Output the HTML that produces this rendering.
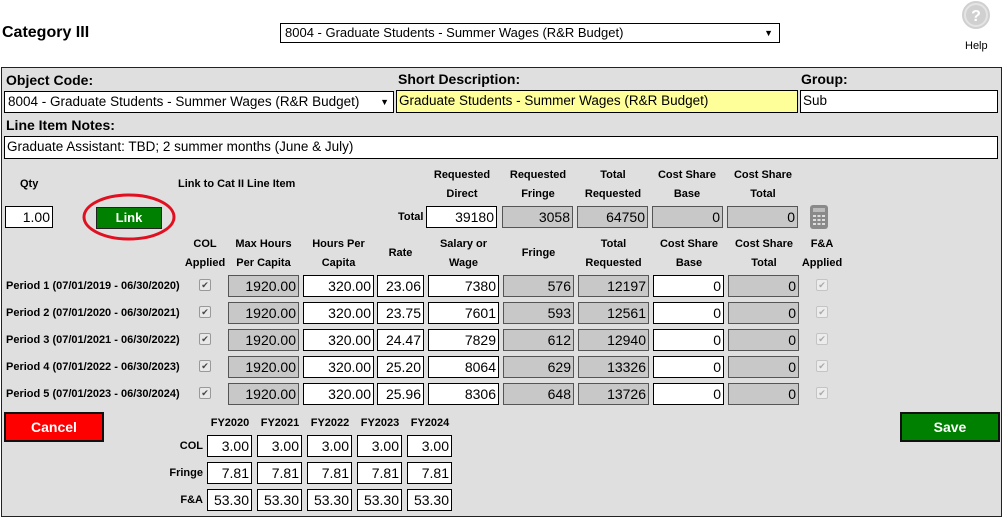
<!DOCTYPE html>
<html><head><meta charset="utf-8"><style>
*{box-sizing:border-box;margin:0;padding:0}
body{width:1007px;height:522px;background:#fff;font-family:"Liberation Sans",Arial,sans-serif;position:relative;overflow:hidden;color:#000}
.a{position:absolute}
.i{position:absolute;height:22px;border:1px solid #000;background:#fff;font-size:14px;line-height:20px;text-align:right;padding-right:2px;color:#000;white-space:nowrap;overflow:hidden}
.g{background:#c8c8c8;border-color:#555}
.l{position:absolute;font-size:11px;font-weight:bold;text-align:center;line-height:19px;white-space:nowrap}
.lb{position:absolute;font-size:14px;font-weight:bold;white-space:nowrap}
.p{position:absolute;font-size:11px;font-weight:bold;left:6px;white-space:nowrap}
.cb{position:absolute;width:12px;height:12px;border:1px solid #999;background:#e8e8e8;border-radius:2px;font-size:9px;line-height:10px;text-align:center;color:#444}
.cb.d{color:#aaa;border-color:#c4c4c4;background:#ececec}
</style></head><body>
<div class="a" style="left:2px;top:24px;font-size:16px;font-weight:bold">Category III</div>
<div class="i" style="left:280px;top:23px;width:500px;height:20px;text-align:left;padding-left:4px;font-size:13px;line-height:18px">8004 - Graduate Students - Summer Wages (R&amp;R Budget)<span style="position:absolute;right:6px;font-size:9px">▼</span></div>
<svg class="a" style="left:961px;top:0" width="30" height="30"><circle cx="15" cy="15" r="13" fill="#e4e4e4" stroke="#d0d0d0" stroke-width="2"/><circle cx="15" cy="15" r="10" fill="#d0d0d0"/><text x="15" y="21" font-size="16" font-weight="bold" fill="#fff" text-anchor="middle" font-family="Liberation Sans">?</text></svg>
<div class="a" style="left:965px;top:40px;font-size:11px">Help</div>

<div class="a" style="left:1px;top:67px;width:1001px;height:450px;background:#dfdfdf;border:1px solid #222"></div>
<div class="lb" style="left:6px;top:72px">Object Code:</div>
<div class="lb" style="left:398px;top:71px">Short Description:</div>
<div class="lb" style="left:801px;top:71px">Group:</div>
<div class="i" style="left:4px;top:91px;width:390px;text-align:left;padding-left:3px;font-size:13.5px">8004 - Graduate Students - Summer Wages (R&amp;R Budget)<span style="position:absolute;right:4px;font-size:9px">▼</span></div>
<div class="i" style="left:396px;top:90px;width:402px;height:23px;background:#ffff99;text-align:left;padding-left:2px;font-size:13.5px">Graduate Students - Summer Wages (R&amp;R Budget)</div>
<div class="i" style="left:800px;top:90px;width:198px;height:23px;text-align:left;padding-left:2px;font-size:13.5px">Sub</div>
<div class="lb" style="left:6px;top:117px">Line Item Notes:</div>
<div class="i" style="left:4px;top:136px;width:994px;height:23px;text-align:left;padding-left:2px;font-size:13.5px">Graduate Assistant: TBD; 2 summer months (June &amp; July)</div>

<div class="l" style="left:20px;top:175px">Qty</div>
<div class="l" style="left:178px;top:175px">Link to Cat II Line Item</div>
<div class="i" style="left:5px;top:206px;width:48px">1.00</div>
<div class="a" style="left:96px;top:207px;width:66px;height:22px;background:#008000;border:1px solid #222;color:#fff;font-weight:bold;font-size:13px;text-align:center;line-height:20px">Link</div>
<svg class="a" style="left:80px;top:190px" width="100" height="54"><ellipse cx="49" cy="27" rx="45" ry="22" fill="none" stroke="#e01020" stroke-width="3"/></svg>

<div class="l" style="left:426px;top:166px;width:72px">Requested<br>Direct</div>
<div class="l" style="left:502px;top:166px;width:72px">Requested<br>Fringe</div>
<div class="l" style="left:577px;top:166px;width:72px">Total<br>Requested</div>
<div class="l" style="left:649px;top:166px;width:76px">Cost Share<br>Base</div>
<div class="l" style="left:725px;top:166px;width:76px">Cost Share<br>Total</div>
<div class="l" style="left:398px;top:208px">Total</div>
<div class="i" style="left:426px;top:206px;width:71px">39180</div>
<div class="i g" style="left:502px;top:206px;width:71px">3058</div>
<div class="i g" style="left:577px;top:206px;width:71px">64750</div>
<div class="i g" style="left:652px;top:206px;width:71px">0</div>
<div class="i g" style="left:727px;top:206px;width:71px">0</div>
<svg class="a" style="left:810px;top:205px" width="18" height="24"><rect x="0" y="0" width="18" height="24" rx="3" fill="#8a8a8a"/><rect x="3" y="3" width="12" height="4" fill="#bbb"/><g fill="#ddd"><rect x="3" y="10" width="3" height="2"/><rect x="7.5" y="10" width="3" height="2"/><rect x="12" y="10" width="3" height="2"/><rect x="3" y="14" width="3" height="2"/><rect x="7.5" y="14" width="3" height="2"/><rect x="12" y="14" width="3" height="2"/><rect x="3" y="18" width="3" height="2"/><rect x="7.5" y="18" width="3" height="2"/><rect x="12" y="18" width="3" height="2"/></g></svg>

<div class="l" style="left:180px;top:235px;width:50px">COL<br>Applied</div>
<div class="l" style="left:228px;top:235px;width:71px">Max Hours<br>Per Capita</div>
<div class="l" style="left:303px;top:235px;width:71px">Hours Per<br>Capita</div>
<div class="l" style="left:377px;top:244px;width:47px">Rate</div>
<div class="l" style="left:428px;top:235px;width:71px">Salary or<br>Wage</div>
<div class="l" style="left:503px;top:244px;width:71px">Fringe</div>
<div class="l" style="left:578px;top:235px;width:71px">Total<br>Requested</div>
<div class="l" style="left:651px;top:235px;width:76px">Cost Share<br>Base</div>
<div class="l" style="left:726px;top:235px;width:76px">Cost Share<br>Total</div>
<div class="l" style="left:800px;top:235px;width:44px">F&amp;A<br>Applied</div>

<div class="p" style="top:280px">Period 1 (07/01/2019 - 06/30/2020)</div>
<div class="cb" style="left:199px;top:279px">✔</div>
<div class="i g" style="left:228px;top:275px;width:71px">1920.00</div>
<div class="i" style="left:303px;top:275px;width:71px">320.00</div>
<div class="i" style="left:377px;top:275px;width:47px">23.06</div>
<div class="i" style="left:428px;top:275px;width:71px">7380</div>
<div class="i g" style="left:503px;top:275px;width:71px">576</div>
<div class="i g" style="left:578px;top:275px;width:71px">12197</div>
<div class="i" style="left:653px;top:275px;width:71px">0</div>
<div class="i g" style="left:728px;top:275px;width:71px">0</div>
<div class="cb d" style="left:816px;top:279px">✔</div>

<div class="p" style="top:307px">Period 2 (07/01/2020 - 06/30/2021)</div>
<div class="cb" style="left:199px;top:306px">✔</div>
<div class="i g" style="left:228px;top:302px;width:71px">1920.00</div>
<div class="i" style="left:303px;top:302px;width:71px">320.00</div>
<div class="i" style="left:377px;top:302px;width:47px">23.75</div>
<div class="i" style="left:428px;top:302px;width:71px">7601</div>
<div class="i g" style="left:503px;top:302px;width:71px">593</div>
<div class="i g" style="left:578px;top:302px;width:71px">12561</div>
<div class="i" style="left:653px;top:302px;width:71px">0</div>
<div class="i g" style="left:728px;top:302px;width:71px">0</div>
<div class="cb d" style="left:816px;top:306px">✔</div>

<div class="p" style="top:334px">Period 3 (07/01/2021 - 06/30/2022)</div>
<div class="cb" style="left:199px;top:333px">✔</div>
<div class="i g" style="left:228px;top:329px;width:71px">1920.00</div>
<div class="i" style="left:303px;top:329px;width:71px">320.00</div>
<div class="i" style="left:377px;top:329px;width:47px">24.47</div>
<div class="i" style="left:428px;top:329px;width:71px">7829</div>
<div class="i g" style="left:503px;top:329px;width:71px">612</div>
<div class="i g" style="left:578px;top:329px;width:71px">12940</div>
<div class="i" style="left:653px;top:329px;width:71px">0</div>
<div class="i g" style="left:728px;top:329px;width:71px">0</div>
<div class="cb d" style="left:816px;top:333px">✔</div>

<div class="p" style="top:361px">Period 4 (07/01/2022 - 06/30/2023)</div>
<div class="cb" style="left:199px;top:360px">✔</div>
<div class="i g" style="left:228px;top:356px;width:71px">1920.00</div>
<div class="i" style="left:303px;top:356px;width:71px">320.00</div>
<div class="i" style="left:377px;top:356px;width:47px">25.20</div>
<div class="i" style="left:428px;top:356px;width:71px">8064</div>
<div class="i g" style="left:503px;top:356px;width:71px">629</div>
<div class="i g" style="left:578px;top:356px;width:71px">13326</div>
<div class="i" style="left:653px;top:356px;width:71px">0</div>
<div class="i g" style="left:728px;top:356px;width:71px">0</div>
<div class="cb d" style="left:816px;top:360px">✔</div>

<div class="p" style="top:388px">Period 5 (07/01/2023 - 06/30/2024)</div>
<div class="cb" style="left:199px;top:387px">✔</div>
<div class="i g" style="left:228px;top:383px;width:71px">1920.00</div>
<div class="i" style="left:303px;top:383px;width:71px">320.00</div>
<div class="i" style="left:377px;top:383px;width:47px">25.96</div>
<div class="i" style="left:428px;top:383px;width:71px">8306</div>
<div class="i g" style="left:503px;top:383px;width:71px">648</div>
<div class="i g" style="left:578px;top:383px;width:71px">13726</div>
<div class="i" style="left:653px;top:383px;width:71px">0</div>
<div class="i g" style="left:728px;top:383px;width:71px">0</div>
<div class="cb d" style="left:816px;top:387px">✔</div>

<div class="a" style="left:4px;top:412px;width:100px;height:30px;background:#ff0000;border:2px solid #111;color:#fff;font-weight:bold;font-size:14px;text-align:center;line-height:27px">Cancel</div>
<div class="a" style="left:900px;top:412px;width:100px;height:30px;background:#008000;border:2px solid #111;color:#fff;font-weight:bold;font-size:14px;text-align:center;line-height:27px">Save</div>

<div class="l" style="left:207px;top:414px;width:46px">FY2020</div>
<div class="l" style="left:257px;top:414px;width:46px">FY2021</div>
<div class="l" style="left:307px;top:414px;width:46px">FY2022</div>
<div class="l" style="left:357px;top:414px;width:46px">FY2023</div>
<div class="l" style="left:407px;top:414px;width:46px">FY2024</div>
<div class="l" style="left:150px;top:437px;width:53px;text-align:right">COL</div>
<div class="l" style="left:150px;top:464px;width:53px;text-align:right">Fringe</div>
<div class="l" style="left:150px;top:491px;width:53px;text-align:right">F&amp;A</div>
<div class="i" style="left:207px;top:435px;width:45px">3.00</div>
<div class="i" style="left:257px;top:435px;width:45px">3.00</div>
<div class="i" style="left:307px;top:435px;width:45px">3.00</div>
<div class="i" style="left:357px;top:435px;width:45px">3.00</div>
<div class="i" style="left:407px;top:435px;width:45px">3.00</div>
<div class="i" style="left:207px;top:462px;width:45px">7.81</div>
<div class="i" style="left:257px;top:462px;width:45px">7.81</div>
<div class="i" style="left:307px;top:462px;width:45px">7.81</div>
<div class="i" style="left:357px;top:462px;width:45px">7.81</div>
<div class="i" style="left:407px;top:462px;width:45px">7.81</div>
<div class="i" style="left:207px;top:489px;width:45px">53.30</div>
<div class="i" style="left:257px;top:489px;width:45px">53.30</div>
<div class="i" style="left:307px;top:489px;width:45px">53.30</div>
<div class="i" style="left:357px;top:489px;width:45px">53.30</div>
<div class="i" style="left:407px;top:489px;width:45px">53.30</div>
</body></html>
